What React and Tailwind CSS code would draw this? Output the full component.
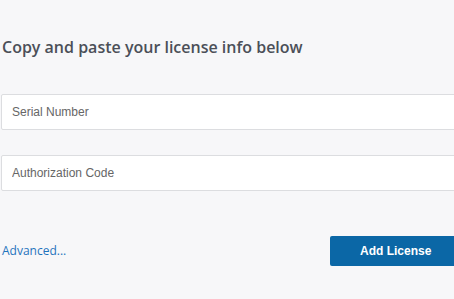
export default function App() {
  return (
    <div className="w-[454px] h-[299px] bg-[#f7f7f9] overflow-hidden pl-px">
      <h2 className="pt-[36px] pl-px text-[16px] font-semibold text-[#4b4f58] leading-[22px] font-['Open_Sans',sans-serif]">
        Copy and paste your license info below
      </h2>
      <div className="mt-[36px] w-[470px] flex flex-col gap-[25px]">
        <input
          className="h-[36px] bg-white border border-[#dcdde0] rounded-[2px] px-[10px] text-[12px] text-[#555] placeholder:text-[#666] font-['Liberation_Sans',Arial,sans-serif] outline-none"
          placeholder="Serial Number"
        />
        <input
          className="h-[36px] bg-white border border-[#dcdde0] rounded-[2px] px-[10px] text-[12px] text-[#555] placeholder:text-[#666] font-['Liberation_Sans',Arial,sans-serif] outline-none"
          placeholder="Authorization Code"
        />
      </div>
      <div className="mt-[45px] flex items-center justify-between w-[479px]">
        <a href="#" className="pl-px text-[12px] text-[#1f74bd] font-['Open_Sans',sans-serif]">
          Advanced...
        </a>
        <button className="w-[150px] h-[30px] bg-[#0b67a6] rounded-[2px] text-white font-bold text-[12px] font-['Liberation_Sans',Arial,sans-serif] text-left pl-[30px]">
          Add License
        </button>
      </div>
    </div>
  );
}
